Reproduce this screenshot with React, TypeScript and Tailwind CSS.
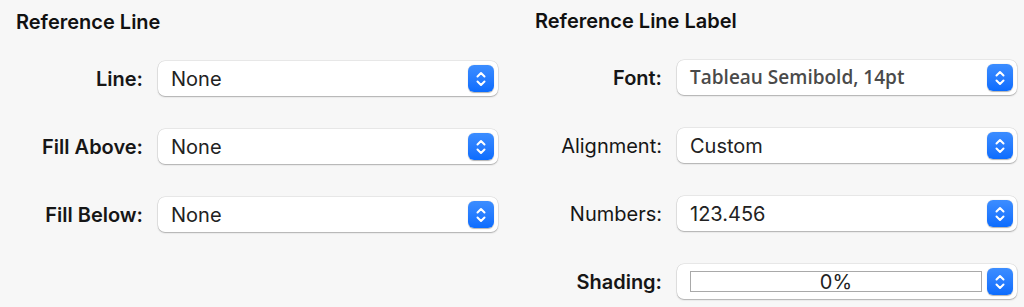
import React from "react";

const font = { fontFamily: "Inter, 'Liberation Sans', sans-serif" };

function Stepper() {
  return (
    <div className="flex h-[27px] w-[26px] shrink-0 items-center justify-center rounded-[6px] bg-gradient-to-b from-[#3c8dff] to-[#0b6cfe] shadow-[0_0.5px_1px_rgba(0,0,0,0.3)]">
      <svg width="12" height="18" viewBox="0 0 12 18" fill="none">
        <path d="M2.5 6.5 L6 3 L9.5 6.5" stroke="white" strokeWidth="2" strokeLinecap="round" strokeLinejoin="round" />
        <path d="M2.5 11.5 L6 15 L9.5 11.5" stroke="white" strokeWidth="2" strokeLinecap="round" strokeLinejoin="round" />
      </svg>
    </div>
  );
}

function Select({ children, className = "" }: { children: React.ReactNode; className?: string }) {
  return (
    <div className="flex h-[35px] w-[340px] items-center rounded-[7px] bg-white pr-[4px] shadow-[0_0_0_0.5px_rgba(0,0,0,0.12),0_1px_1.5px_rgba(0,0,0,0.25)]">
      <div className={`flex-1 min-w-0 pl-[13px] ${className}`}>{children}</div>
      <Stepper />
    </div>
  );
}

function Row({ label, bold = true, children }: { label: string; bold?: boolean; children: React.ReactNode }) {
  return (
    <div className="flex items-center">
      <div className={`w-[127px] whitespace-nowrap text-right text-[20px] text-[#161616] ${bold ? "font-semibold" : "font-normal"}`}>{label}</div>
      <div className="ml-[15px]">{children}</div>
    </div>
  );
}

export default function App() {
  return (
    <div className="flex h-[307px] w-[1024px] overflow-hidden bg-[#f7f7f7]" style={font}>
      <div className="w-[519px] pl-[16px]">
        <h2 className="mt-[9px] h-[26px] text-[20px] font-semibold leading-[26px] text-[#111]">Reference Line</h2>
        <div className="mt-[26px] flex flex-col gap-[33px]">
          <Row label="Line:">
            <Select className="text-[20px] text-[#222]">None</Select>
          </Row>
          <Row label="Fill Above:">
            <Select className="text-[20px] text-[#222]">None</Select>
          </Row>
          <Row label="Fill Below:">
            <Select className="text-[20px] text-[#222]">None</Select>
          </Row>
        </div>
      </div>
      <div className="w-[505px] pl-[16px]">
        <h2 className="mt-[8px] h-[26px] text-[20px] font-semibold leading-[26px] text-[#111]">Reference Line Label</h2>
        <div className="mt-[26px] flex flex-col gap-[33px]">
          <Row label="Font:">
            <Select className="text-[19px] font-semibold text-[#4a4a4a] [font-family:'Open_Sans',sans-serif]">Tableau Semibold, 14pt</Select>
          </Row>
          <Row label="Alignment:" bold={false}>
            <Select className="text-[20px] text-[#222]">Custom</Select>
          </Row>
          <Row label="Numbers:" bold={false}>
            <Select className="text-[20px] text-[#222]">123.456</Select>
          </Row>
          <Row label="Shading:">
            <Select className="pr-[5px]">
              <div className="flex h-[21px] items-center justify-center border border-[#a9a9a9] bg-white text-[20px] leading-none text-[#222]">0%</div>
            </Select>
          </Row>
        </div>
      </div>
    </div>
  );
}
